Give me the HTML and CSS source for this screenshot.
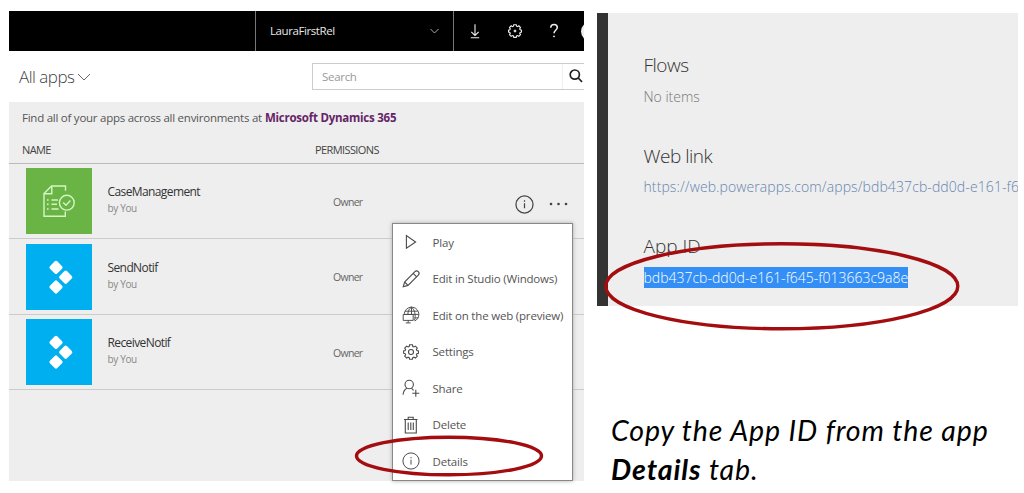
FILE: index.html
```html
<!DOCTYPE html>
<html lang="en">
<head>
<meta charset="utf-8">
<title>Find the App ID</title>
<link rel="stylesheet" href="styles.css">
</head>
<body>
<svg class="defs" aria-hidden="true">
  <symbol id="gear" viewBox="0 0 16 16">
    <path d="M6.600 .8h2.800l.4 1.700 1.100.5 1.500-.9 1.900 1.900-.9 1.500.5 1.100 1.600.4v2.200l-1.600.4-.5 1.100.9 1.500-1.900 1.900-1.500-.9-1.100.5-.4 1.600H6.600l-.4-1.600-1.100-.5-1.500.9-1.900-1.900.9-1.500-.5-1.100-1.500-.4V7l1.500-.4.5-1.100-.9-1.500 1.900-1.900 1.500.9 1.100-.5z"/>
  </symbol>
  <symbol id="info" viewBox="0 0 20 20">
    <circle cx="10" cy="10" r="9"/><path d="M10 8.600V14M10 5.600V7"/>
  </symbol>
  <symbol id="diamonds" viewBox="0 0 66 66">
    <rect x="24.800" y="18.200" width="10.400" height="10.400" rx="1.800" transform="rotate(45 30 23.400)"/>
    <rect x="34.500" y="28" width="10.400" height="10.400" rx="1.800" transform="rotate(45 39.700 33.200)"/>
    <rect x="24.800" y="37.800" width="10.400" height="10.400" rx="1.800" transform="rotate(45 30 43)"/>
  </symbol>
</svg>
<main class="page">
  <section class="apps">
    <header class="topbar">
      <div class="brand"></div>
      <div class="env">
        <span class="env-name">LauraFirstRel</span>
        <svg class="env-chevron" viewBox="0 0 9 6"><path d="M.5 1 4.500 5l4-4"/></svg>
      </div>
      <div class="tools">
        <svg class="tool" viewBox="0 0 16 16"><path d="M8 1.300v11M4.300 8.800 8 12.500l3.700-3.700M3.800 14.700h8.400"/></svg>
        <svg class="tool" viewBox="0 0 16 16"><g class="thick"><use href="#gear" x="1" y="1" width="14" height="14"/></g><circle class="dot" cx="8" cy="8" r="1"/></svg>
        <svg class="tool help" viewBox="0 0 16 16"><path d="M4.700 4.700C4.800 2.600 6.200 1.600 8 1.600s3.300 1.100 3.300 3c0 2.500-3.300 2.900-3.300 5.600"/><circle class="dot" cx="8" cy="13.400" r=".55"/></svg>
        <span class="avatar"></span>
      </div>
    </header>
    <div class="toolbar">
      <div class="filter"><span>All apps</span>
        <svg class="filter-chevron" viewBox="0 0 14 8"><path d="M1 1l6 6 6-6"/></svg>
      </div>
      <div class="search"><span>Search</span>
        <span class="search-button"><svg viewBox="0 0 14 14"><circle cx="5.800" cy="5.600" r="4.600"/><path d="M9.200 9l3.800 3.800"/></svg></span>
      </div>
    </div>
    <p class="notice"><span>Find all of your apps across all environments at</span><b class="notice-link">Microsoft Dynamics 365</b></p>
    <div class="heads"><span class="head-name">NAME</span><span>PERMISSIONS</span></div>
    <div class="rows">
      <div class="row">
        <svg class="tile green" viewBox="0 0 66 66">
          <path d="M39.500 22.700V18H25.600L18 25.600V48.300H39.300V43.500M25.800 18.500v7.200H18.500"/>
          <path d="M21 32h1.600M21 36.300h1.600M21 41h1.600M25.500 32H32M25.500 36.300H31M25.500 41H32.500"/>
          <circle cx="40.800" cy="34.700" r="7.400"/><path d="M37.200 34.400l2.800 2.800 4.400-4.600"/>
        </svg>
        <div class="label"><span class="name">CaseManagement</span><span class="by">by You</span></div>
        <span class="perm">Owner</span>
        <div class="actions">
          <svg class="row-info"><use href="#info"/></svg>
          <svg class="dots" viewBox="0 0 20 4"><circle cx="2" cy="2" r="1.300"/><circle cx="9.500" cy="2" r="1.300"/><circle cx="17" cy="2" r="1.300"/></svg>
        </div>
      </div>
      <div class="row">
        <svg class="tile blue"><use href="#diamonds"/></svg>
        <div class="label"><span class="name">SendNotif</span><span class="by">by You</span></div>
        <span class="perm">Owner</span>
      </div>
      <div class="row">
        <svg class="tile blue"><use href="#diamonds"/></svg>
        <div class="label"><span class="name">ReceiveNotif</span><span class="by">by You</span></div>
        <span class="perm">Owner</span>
      </div>
    </div>
    <div class="menu">
      <div class="item"><svg viewBox="0 0 18 18"><path d="M4.400 2.600v12.600L13.600 9z"/></svg><span>Play</span></div>
      <div class="item"><svg viewBox="0 0 18 18"><path d="M1.200 16.800 2.600 12 12.900 1.700a2.350 2.350 0 0 1 3.400 3.400L6 15.400zM11.200 3.400l3.400 3.400M2.600 12 6 15.400"/></svg><span>Edit in Studio (Windows)</span></div>
      <div class="item"><svg class="globe" viewBox="0 0 18 18"><path d="M2.300 7.800A7.300 7.300 0 1 1 12.800 15M3 5.200h12.800M2.200 8.400h14.600M12.500 11.900h3.800M9.500 1.100v7M9.500 1.100C7 2.700 5.900 5.200 5.900 8.200M9.500 1.100c3.200 2.300 4.600 8.500 3 13.300"/><path d="M1.200 8.500h10v5.900h-10zM6.200 14.400v2.300M3.700 16.900h5"/></svg><span>Edit on the web (preview)</span></div>
      <div class="item"><svg viewBox="0 0 18 18"><use href="#gear" x="1" y="1" width="16" height="16"/><circle cx="9" cy="9" r="2.500"/></svg><span>Settings</span></div>
      <div class="item"><svg viewBox="0 0 18 18"><circle cx="7.200" cy="5.500" r="4.200"/><path d="M1 15.800C1.300 12.700 2.600 10.200 5.200 9.200M9.300 9.200C10.400 9.800 11 10.500 11.500 11.500M13.800 10.800v7M10.300 14.300h7"/></svg><span>Share</span></div>
      <div class="item"><svg viewBox="0 0 18 18"><path d="M2 3.500h13.500M6.200 3.300V1.200h5v2.100M3.300 3.500V17h11V3.500M6.200 6.500v7.500M8.800 6.500v7.500M11.300 6.500v7.500"/></svg><span>Delete</span></div>
      <div class="item"><svg viewBox="0 0 20 20"><use href="#info"/></svg><span>Details</span></div>
    </div>
  </section>
  <section class="side">
    <div class="details">
      <div class="field"><h2 class="tight">Flows</h2><p>No items</p></div>
      <div class="field"><h2 class="tight">Web link</h2><p class="link">https://web.powerapps.com/apps/bdb437cb-dd0d-e161-f6</p></div>
      <div class="field"><h2>App ID</h2><p><mark>bdb437cb-dd0d-e161-f645-f013663c9a8e</mark></p></div>
    </div>
    <p class="caption">Copy the App ID from the app<br><b>Details</b> tab.</p>
  </section>
  <svg class="marks" viewBox="0 0 1024 493">
    <ellipse cx="449" cy="456" rx="92.500" ry="18.800"/>
    <ellipse cx="781.800" cy="286.300" rx="176" ry="42.500"/>
  </svg>
</main>
</body>
</html>
```
FILE: styles.css
```css
* { box-sizing: border-box; }
body { margin: 0; background: #fff; font-family: "Open Sans", "Noto Sans", sans-serif; color: #555; }
p, h2 { margin: 0; }
svg { display: block; fill: none; flex: none; }
span, b, h2, p { white-space: nowrap; }
.defs { position: absolute; width: 0; height: 0; }
.page { position: relative; width: 1024px; height: 493px; overflow: hidden; display: flex; padding: 11px 6px 0 9px; gap: 13px; }

.apps { position: relative; width: 575px; height: 470px; background: #eee; flex: none; }
.topbar { display: flex; height: 40px; background: #000; }
.brand { width: 246px; }
.env { width: 199px; border: solid #777; border-width: 0 1px; display: flex; align-items: center; justify-content: space-between; padding: 0 14px; color: #e8e8e8; font-size: 11.500px; letter-spacing: -.42px; }
.env-name { padding-bottom: 1px; }
.env-chevron { width: 9px; height: 6px; stroke: #aaa; }
.tools { flex: 1; display: flex; align-items: center; gap: 23.500px; padding-left: 13px; overflow: hidden; }
.tool { width: 16px; height: 16px; stroke: #eee; stroke-width: 1.100; }
.thick { stroke-width: 1.300; }
.help { stroke-width: 1.500; }
.dot { fill: #eee; stroke-width: .8; }
.avatar { width: 19px; height: 19px; border-radius: 50%; background: #eee; flex: none; margin-left: -5px; }
.toolbar { height: 51px; background: #fff; display: flex; justify-content: space-between; align-items: center; padding-left: 10px; }
.filter { display: flex; align-items: center; gap: 3px; font-size: 17px; font-weight: 300; color: #444; letter-spacing: -.5px; }
.filter-chevron { width: 14px; height: 8px; stroke: #666; }
.search { width: 272px; height: 27px; border: 1px solid #ccc; border-right: 0; display: flex; align-items: center; justify-content: space-between; padding-left: 9px; font-size: 11.500px; letter-spacing: -.3px; color: #999; }
.search-button { border-left: 1px solid #eee; height: 25px; width: 22px; padding: 5px 0 0 6px; }
.search-button svg { width: 14px; height: 14px; stroke: #222; stroke-width: 1.700; }
.notice { height: 31px; padding-left: 13px; display: flex; align-items: center; gap: 3px; font-size: 11.500px; letter-spacing: -.25px; color: #555; }
.notice-link { color: #652468; letter-spacing: -.24px; }
.heads { height: 30.500px; border-bottom: 1px solid #bbb; display: flex; align-items: center; padding: 3px 0 0 13px; font-size: 11px; letter-spacing: -.6px; color: #444; }
.head-name { width: 293px; }
.row { height: 75.500px; border-bottom: 1px solid #ccc; display: flex; align-items: flex-start; padding: 4.500px 0 0 16.500px; }
.tile { width: 66px; height: 66px; }
.green { background: #69b445; stroke: #d5f5c2; stroke-width: 1.400; }
.blue { background: #00aff0; fill: #fff; }
.label { display: flex; flex-direction: column; width: 241.500px; padding: 15px 0 0 16px; }
.name { font-size: 12px; line-height: 18px; letter-spacing: -.6px; color: #333; }
.by { font-size: 10px; line-height: 14px; letter-spacing: -.35px; color: #888; }
.perm { width: 181.500px; padding-top: 26.500px; font-size: 10.500px; line-height: 14px; letter-spacing: -.7px; color: #666; }
.actions { display: flex; align-items: center; gap: 15.500px; padding-top: 26.500px; }
.row-info { width: 19px; height: 19px; stroke: #444; stroke-width: 1.300; }
.dots { width: 20px; height: 4px; fill: #444; }
.menu { position: absolute; left: 383px; top: 212px; width: 181px; height: 258px; background: #fff; border: 1px solid #888; box-shadow: 0 0 4px #aaa; padding-left: 9px; }
.item { height: 36.500px; display: flex; align-items: center; gap: 12.500px; font-size: 11.500px; letter-spacing: -.19px; color: #555; }
.item svg { width: 18px; height: 18px; stroke: #4a4a4a; stroke-width: 1.100; overflow: visible; }
.item .globe { stroke-width: .95; }

.side { width: 421px; padding-top: 1.500px; }
.details { height: 293.500px; background: #eee; border-left: 11.500px solid #333; padding: 39.500px 0 0 35.500px; overflow: hidden; }
.field { height: 90.500px; font-weight: 300; }
.field h2 { font-size: 19px; line-height: 26px; font-weight: 300; color: #333; }
.field .tight { letter-spacing: -.5px; }
.field p { font-size: 14px; line-height: 21px; padding-top: 7.500px; color: #777; }
.field .link { color: #6684b0; letter-spacing: .1px; }
mark { display: inline-block; background: #338ff5; color: #fff; height: 21px; }
.caption { padding: 105px 0 0 14px; font: italic 28.500px/39px Lato, sans-serif; letter-spacing: .9px; color: #000; }
.marks { position: absolute; left: 0; top: 0; width: 1024px; height: 493px; stroke: #a30d10; stroke-width: 3.400; }
```
